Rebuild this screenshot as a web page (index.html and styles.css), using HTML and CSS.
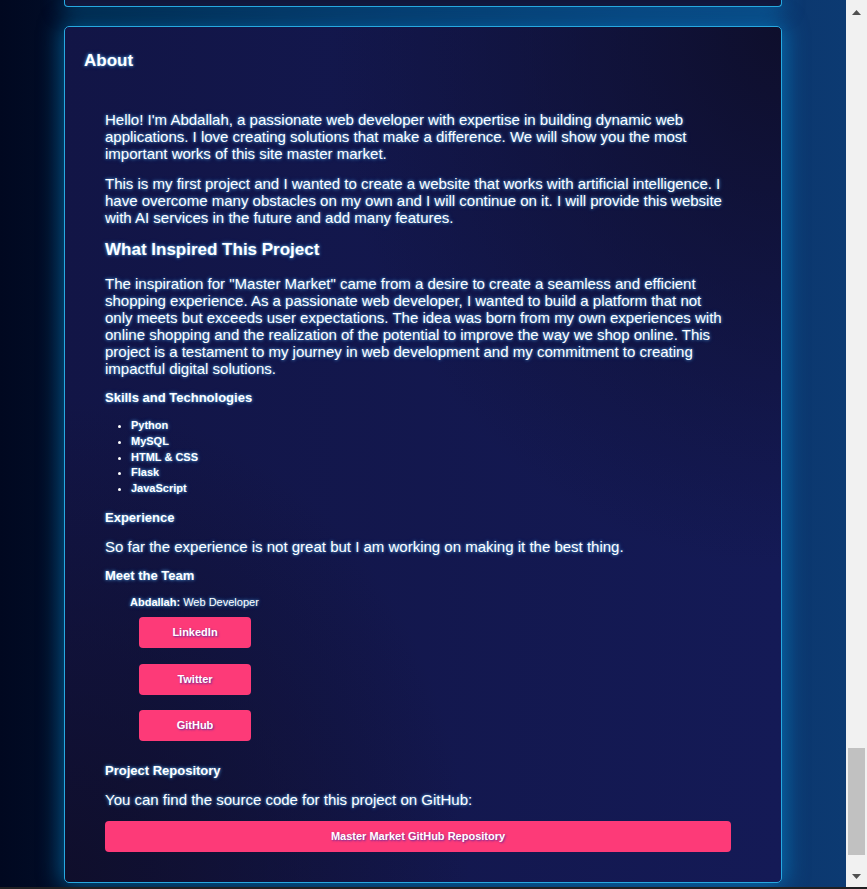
FILE: index.html
```html
<!DOCTYPE html>
<html lang="en">
<head>
<meta charset="utf-8">
<title>About - Master Market</title>
<link rel="stylesheet" href="styles.css">
</head>
<body>
<div class="screen">
  <div class="viewport">
    <main class="page">
      <div class="card-tail"></div>
      <section class="card">
        <h2 class="card-title">About</h2>
        <div class="content">
          <p>Hello! I'm Abdallah, a passionate web developer with expertise in building dynamic web applications. I love creating solutions that make a difference. We will show you the most important works of this site master market.</p>
          <p class="p-second">This is my first project and I wanted to create a website that works with artificial intelligence. I have overcome many obstacles on my own and I will continue on it. I will provide this website with AI services in the future and add many features.</p>
          <h3>What Inspired This Project</h3>
          <p>The inspiration for "Master Market" came from a desire to create a seamless and efficient shopping experience. As a passionate web developer, I wanted to build a platform that not only meets but exceeds user expectations. The idea was born from my own experiences with online shopping and the realization of the potential to improve the way we shop online. This project is a testament to my journey in web development and my commitment to creating impactful digital solutions.</p>
          <h4>Skills and Technologies</h4>
          <ul class="skills">
            <li>Python</li>
            <li>MySQL</li>
            <li>HTML &amp; CSS</li>
            <li>Flask</li>
            <li>JavaScript</li>
          </ul>
          <h4>Experience</h4>
          <p>So far the experience is not great but I am working on making it the best thing.</p>
          <h4>Meet the Team</h4>
          <div class="member">
            <p class="member-name"><strong>Abdallah:</strong> Web Developer</p>
            <div class="links">
              <a class="btn" href="#">LinkedIn</a>
              <a class="btn" href="#">Twitter</a>
              <a class="btn" href="#">GitHub</a>
            </div>
          </div>
          <h4>Project Repository</h4>
          <p>You can find the source code for this project on GitHub:</p>
          <a class="btn btn-wide" href="#">Master Market GitHub Repository</a>
        </div>
      </section>
    </main>
    <div class="scrollbar">
      <div class="sb-arrow">
        <svg width="9" height="5" viewBox="0 0 9 5"><polygon points="0,5 4.5,0 9,5" fill="#505050"/></svg>
      </div>
      <div class="sb-track"><div class="sb-thumb"></div></div>
      <div class="sb-arrow">
        <svg width="9" height="5" viewBox="0 0 9 5"><polygon points="0,0 9,0 4.5,5" fill="#505050"/></svg>
      </div>
    </div>
  </div>
  <div class="bottom-edge"></div>
</div>
</body>
</html>
```

FILE: styles.css
```css
html, body {
  margin: 0;
  padding: 0;
  height: 100%;
  overflow: hidden;
}

body {
  font-family: "Liberation Sans", Arial, sans-serif;
  color: #ffffff;
}

.screen {
  display: flex;
  flex-direction: column;
  height: 889px;
}

.viewport {
  display: flex;
  flex: 1;
  min-height: 0;
}

.page {
  flex: 1;
  min-width: 0;
  overflow: hidden;
  background: linear-gradient(90deg, #010820 0%, #02102c 12%, #06214b 40%, #0a3166 75%, #0c3a72 100%);
}

.card-tail {
  width: 718px;
  height: 7px;
  box-sizing: border-box;
  margin: 0 auto;
  border: 1px solid #27a9e1;
  border-top: none;
  border-radius: 0 0 4px 4px;
  background: #12163a;
  box-shadow: 0 0 20px 2px rgba(0, 160, 235, 0.5);
}

.card {
  width: 718px;
  box-sizing: border-box;
  margin: 19px auto 0;
  padding: 24px 19px 30px;
  border: 1px solid #27a9e1;
  border-radius: 5px;
  background:
    radial-gradient(ellipse at 100% 0%, rgba(14, 14, 42, 0.95) 0%, rgba(14, 14, 42, 0) 45%),
    radial-gradient(ellipse at 0% 100%, rgba(15, 14, 42, 0.95) 0%, rgba(15, 14, 42, 0) 40%),
    linear-gradient(90deg, #121546 0%, #141a56 100%);
  box-shadow: 0 0 22px 3px rgba(0, 160, 235, 0.5);
}

.card-title,
.content p,
.content h3,
.content h4,
.skills {
  text-shadow: 0 0 3px rgba(110, 195, 255, 0.85), 0 0 5px rgba(40, 150, 255, 0.35);
}

.card-title {
  margin: 0;
  font-size: 17px;
  font-weight: bold;
}

.content {
  margin: 40px 31px 0 21px;
}

.content p {
  margin: 12px 0;
  font-size: 15px;
}

.content .p-second {
  margin-top: 13px;
}

.content h3 {
  margin: 14px 0 15px;
  font-size: 17px;
  font-weight: bold;
}

.content h4 {
  margin: 13px 0;
  font-size: 13px;
  font-weight: bold;
}

.skills {
  margin: 13px 0;
  padding-left: 26px;
  font-size: 11px;
  font-weight: bold;
  line-height: 15.8px;
}

.member {
  margin: 13px 0 21.5px 25px;
}

.content .member-name {
  margin: 0;
  font-size: 11px;
}

.links {
  display: flex;
  flex-direction: column;
  align-items: flex-start;
  gap: 15.5px;
  margin-top: 9.5px;
  padding-left: 9px;
}

.btn {
  display: block;
  width: 112px;
  height: 31px;
  line-height: 31px;
  text-align: center;
  background: #fd3a78;
  color: #ffffff;
  font-size: 11px;
  font-weight: bold;
  text-decoration: none;
  border-radius: 4px;
  text-shadow: 1px 1px 2px rgba(80, 40, 160, 0.85);
}

.btn-wide {
  width: auto;
  height: 31px;
  line-height: 31px;
  margin-top: 13px;
}

.scrollbar {
  width: 21px;
  flex: none;
  display: flex;
  flex-direction: column;
  background: #f1f1f1;
}

.sb-arrow {
  height: 21px;
  display: flex;
  align-items: center;
  justify-content: center;
  padding-top: 3px;
  box-sizing: border-box;
}

.sb-arrow:last-child {
  padding-top: 0;
  padding-bottom: 0;
}

.sb-track {
  flex: 1;
  display: flex;
  flex-direction: column;
  justify-content: flex-end;
  padding: 0 2px 11px;
}

.sb-thumb {
  height: 107px;
  background: #c1c1c1;
}

.bottom-edge {
  height: 2px;
  background: #1f1f22;
}
```
